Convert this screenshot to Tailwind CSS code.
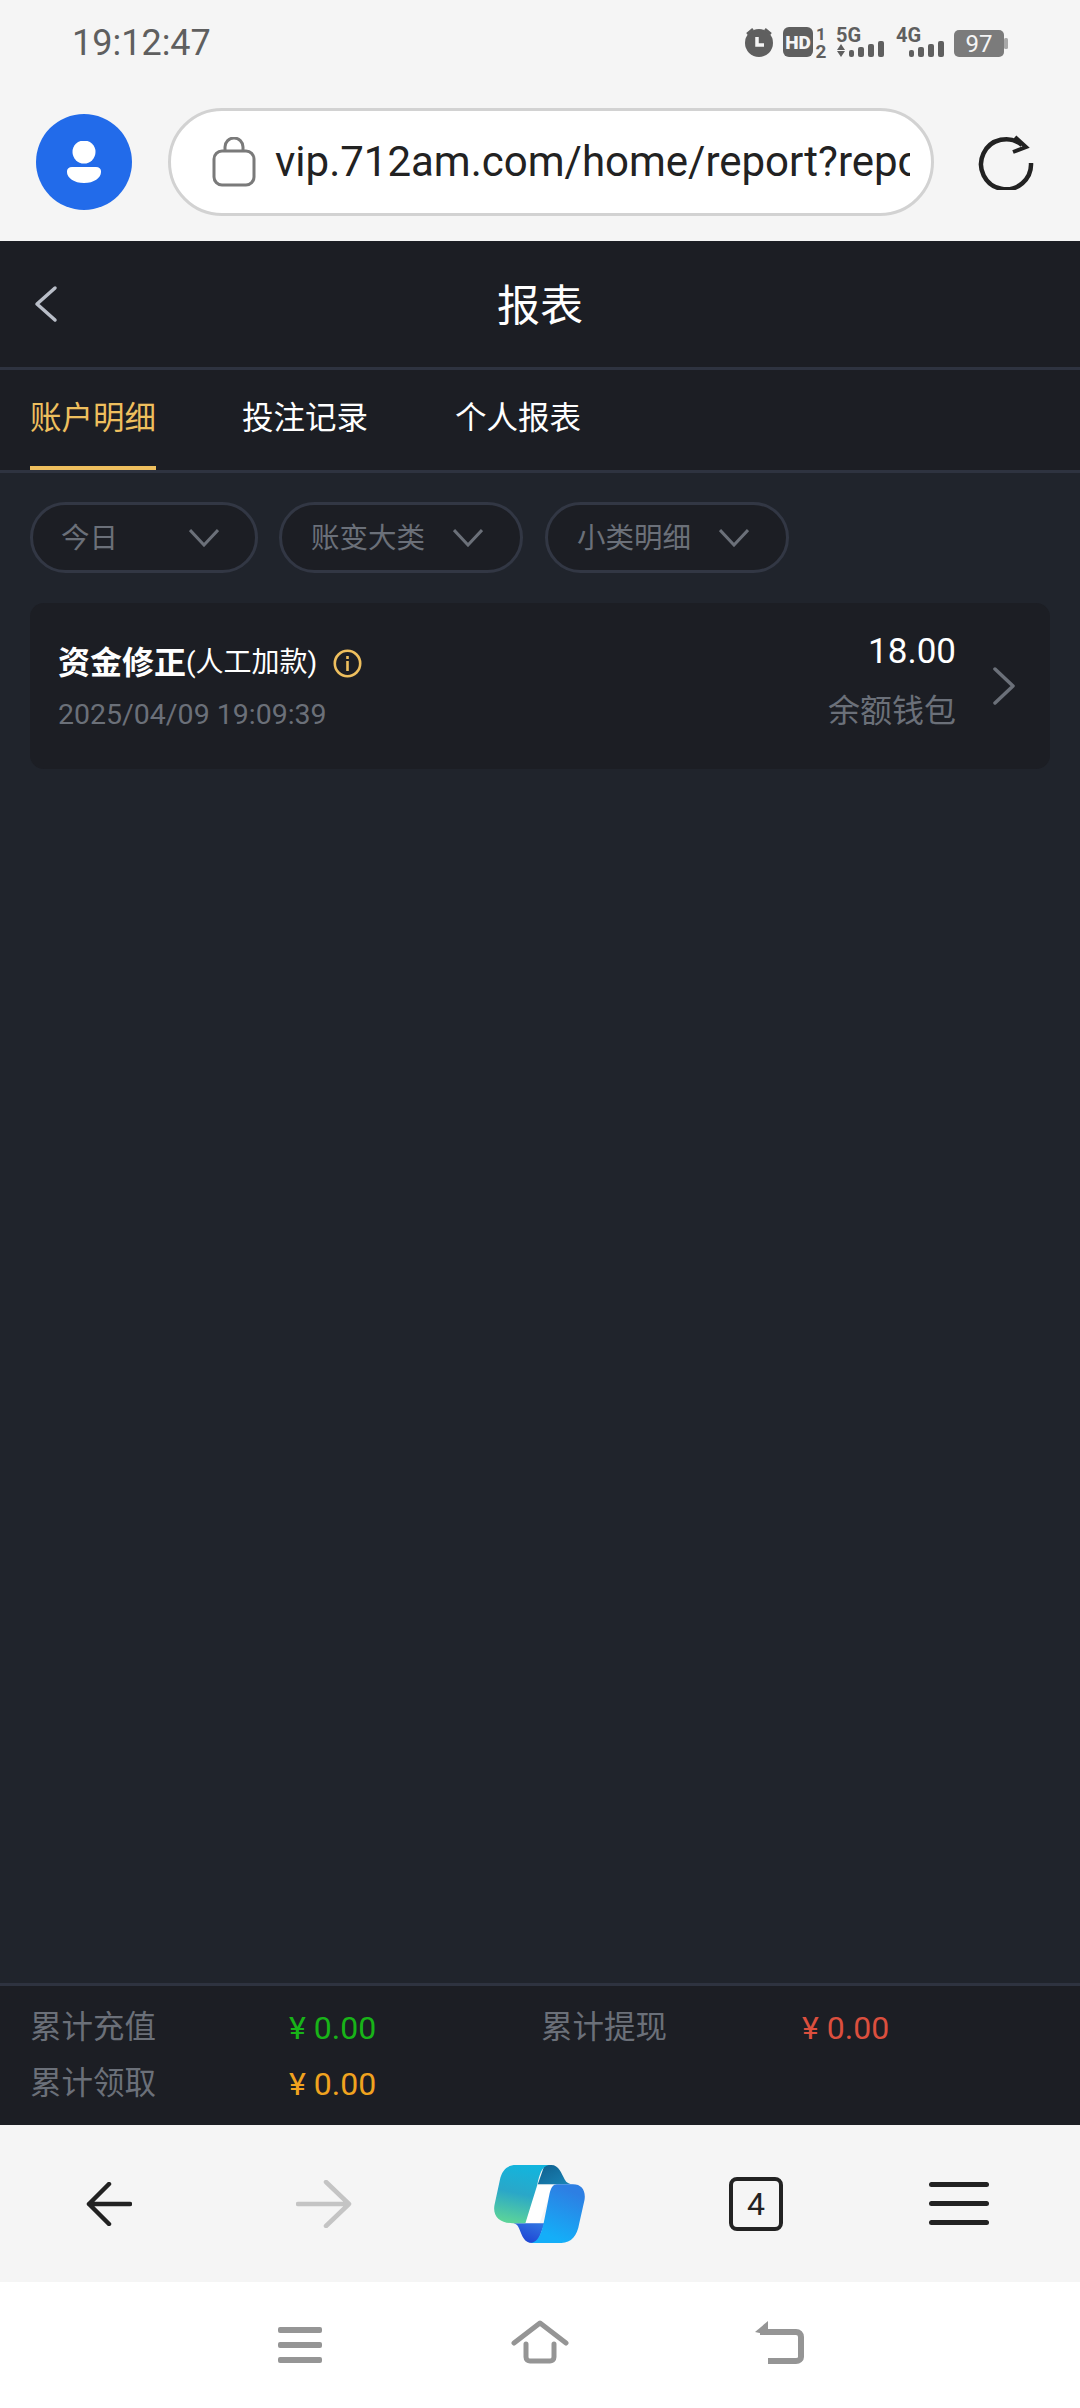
<!DOCTYPE html>
<html lang="zh-CN">
<head>
    <meta charset="UTF-8">
    <meta name="viewport" content="width=device-width, initial-scale=1.0">
    <title>报表</title>
    <script src="https://cdn.jsdelivr.net/npm/@tailwindcss/browser@4"></script>
</head>
<body class="bg-white">
<div class="w-[1080px] h-[2408px] flex flex-col overflow-hidden font-['Roboto','Noto_Sans_CJK_SC',sans-serif]">

    <!-- browser top -->
    <div class="h-[241px] bg-[#f5f5f5] shrink-0">
        <div class="h-[108px] flex justify-between pl-[72px] pr-[70px]">
            <div class="text-[36px] leading-[42px] pt-[22px] text-[#5f5f5f]">19:12:47</div>
            <svg class="mt-[24px] mr-[-4px]" width="270" height="46" viewBox="744 24 270 46" font-family="Roboto" fill="#5f5f5f">
                <circle cx="759" cy="43" r="14" />
                <path d="M747 34l6-5M771 34l-6-5" stroke="#5f5f5f" stroke-width="2.5" fill="none"/>
                <path d="M757 37v8h7" stroke="#f5f5f5" stroke-width="3.5" fill="none"/>
                <rect x="783" y="27" width="30" height="30" rx="6"/>
                <text x="798" y="49" text-anchor="middle" font-size="19" font-weight="900" fill="#f5f5f5">HD</text>
                <text x="821" y="40" text-anchor="middle" font-size="17" font-weight="700">1</text>
                <text x="821" y="58" text-anchor="middle" font-size="19" font-weight="700">2</text>
                <text x="836" y="42" font-size="20" font-weight="700">5G</text>
                <path d="M837 50l4-6 4 6zM837 51h8l-4 6z"/>
                <rect x="849" y="50" width="5" height="7" rx="2"/><rect x="858" y="47" width="6" height="10" rx="2"/><rect x="868" y="44" width="6" height="13" rx="2"/><rect x="878" y="41" width="6" height="16" rx="2"/>
                <text x="896" y="42" font-size="20" font-weight="700">4G</text>
                <rect x="909" y="50" width="5" height="7" rx="2"/><rect x="918" y="47" width="6" height="10" rx="2"/><rect x="928" y="44" width="6" height="13" rx="2"/><rect x="938" y="41" width="6" height="16" rx="2"/>
                <rect x="954" y="30" width="50" height="27" rx="5" fill="#7b7b7b"/>
                <rect x="1004" y="38" width="4" height="11" rx="1.5" fill="#a8a8a8"/>
                <text x="979" y="52" text-anchor="middle" font-size="24" fill="#f5f5f5">97</text>
            </svg>
        </div>
        <div class="flex items-start pl-[36px]">
            <div class="w-[96px] h-[96px] mt-[6px] rounded-full bg-[#226bea] flex items-center justify-center">
                <svg width="34" height="42" viewBox="0 0 34 42" fill="#fff">
                    <circle cx="17" cy="11" r="11.5"/>
                    <path d="M5 26h24c3 0 5 2 5 4v1c0 6-7 11-17 11S0 37 0 31v-1c0-2 2-4 5-4z"/>
                </svg>
            </div>
            <div class="ml-[36px] w-[766px] h-[108px] rounded-full border-[3px] border-[#d2d2d2] bg-white flex items-center pl-[41px] pr-[21px]">
                <svg class="shrink-0" width="44" height="50" viewBox="0 0 44 50" fill="none" stroke="#7a7a7a" stroke-width="3">
                    <rect x="2" y="14" width="40" height="34" rx="8"/>
                    <path d="M13 14v-4a9 9 0 0 1 18 0v4"/>
                </svg>
                <div class="ml-[19px] overflow-hidden whitespace-nowrap text-[42px] leading-[50px] text-[#222]">vip.712am.com/home/report?report=1</div>
            </div>
            <svg class="ml-[43px] mt-[26px]" width="58" height="56" viewBox="0 0 58 56" fill="none" stroke="#222" stroke-width="4.5">
                <path d="M45 11A25 25 0 1 0 54 29" />
                <path d="M38 3l11 10-13 5" stroke-width="4"/>
            </svg>
        </div>
    </div>

    <!-- header -->
    <div class="h-[129px] shrink-0 bg-[#1c1e24] border-b-[3px] border-[#2e3340] relative flex items-center justify-center">
        <svg class="absolute left-[33px] top-[44px]" width="26" height="38" viewBox="0 0 26 38" fill="none" stroke="#b9bec8" stroke-width="3.5" stroke-linecap="round" stroke-linejoin="round">
            <path d="M22 3L4 19l18 16"/>
        </svg>
        <div class="text-[43px] leading-[50px] text-white pt-[3px]">报表</div>
    </div>

    <!-- tabs -->
    <div class="h-[103px] shrink-0 bg-[#1c1e24] border-b-[3px] border-[#2e3340] flex pl-[30px] text-[31.5px] text-white">
        <div class="flex items-center border-b-4 border-[#eebf5e] text-[#eebf5e] pt-[2px]">账户明细</div>
        <div class="flex items-center ml-[86px] mb-[4px] pt-[2px]">投注记录</div>
        <div class="flex items-center ml-[87px] mb-[4px] pt-[2px]">个人报表</div>
    </div>

    <!-- list -->
    <div class="flex-1 bg-[#20242c] px-[30px] pt-[29px]">
        <div class="flex text-[28.5px] text-[#6b7079]">
            <div class="w-[228px] h-[71px] rounded-full border-[3px] border-[#323744] bg-[#1c1e24] flex items-center justify-between pl-[28px] pr-[36px]">
                <span class="pt-[4px]">今日</span>
                <svg width="30" height="18" viewBox="0 0 30 18" fill="none" stroke="#6b7079" stroke-width="3"><path d="M1 1l14 15L29 1"/></svg>
            </div>
            <div class="ml-[21px] w-[244px] h-[71px] rounded-full border-[3px] border-[#323744] bg-[#1c1e24] flex items-center justify-between pl-[29px] pr-[37px]">
                <span class="pt-[4px]">账变大类</span>
                <svg width="30" height="18" viewBox="0 0 30 18" fill="none" stroke="#6b7079" stroke-width="3"><path d="M1 1l14 15L29 1"/></svg>
            </div>
            <div class="ml-[22px] w-[244px] h-[71px] rounded-full border-[3px] border-[#323744] bg-[#1c1e24] flex items-center justify-between pl-[29px] pr-[37px]">
                <span class="pt-[4px]">小类明细</span>
                <svg width="30" height="18" viewBox="0 0 30 18" fill="none" stroke="#6b7079" stroke-width="3"><path d="M1 1l14 15L29 1"/></svg>
            </div>
        </div>

        <div class="mt-[30px] h-[166px] rounded-[14px] bg-[#1c1e24] flex justify-between pl-[28px] pr-[34px]">
            <div class="pt-[38px]">
                <div class="h-[44px] flex items-center text-white">
                    <span class="text-[32px] font-bold">资金修正</span><span class="text-[28px]">(人工加款)</span>
                    <svg class="ml-[16px]" width="29" height="29" viewBox="0 0 29 29" fill="none" stroke="#eebf5e" stroke-width="2.6">
                        <circle cx="14.5" cy="14.5" r="12.7"/>
                        <path d="M14.5 12v10M14.5 7v3"/>
                    </svg>
                </div>
                <div class="mt-[10px] text-[28.5px] leading-[40px] text-[#6b7079]">2025/04/09 19:09:39</div>
            </div>
            <div class="flex">
                <div class="pt-[29px] text-right">
                    <div class="text-[35px] leading-[40px] text-white">18.00</div>
                    <div class="mt-[19px] text-[32px] leading-[40px] text-[#6b7079]">余额钱包</div>
                </div>
                <svg class="ml-[36px] mt-[64px]" width="24" height="38" viewBox="0 0 24 38" fill="none" stroke="#6b7079" stroke-width="3.5" stroke-linecap="round" stroke-linejoin="round">
                    <path d="M3 2l18 17L3 36"/>
                </svg>
            </div>
        </div>
    </div>

    <!-- totals -->
    <div class="h-[142px] shrink-0 bg-[#1c1e24] border-t-[3px] border-[#2e3340] pt-[14px] pl-[30px] grid grid-cols-[259px_252px_261px_1fr] auto-rows-[56px] items-center text-[31.5px] text-[#6b7079]">
        <div>累计充值</div>
        <div class="text-[#18b418] text-[32px]">¥<span class="ml-[8px]">0.00</span></div>
        <div>累计提现</div>
        <div class="text-[#db4f3e] text-[32px]">¥<span class="ml-[8px]">0.00</span></div>
        <div>累计领取</div>
        <div class="text-[#f0a31f] text-[32px]">¥<span class="ml-[8px]">0.00</span></div>
    </div>

    <!-- browser bottom -->
    <div class="h-[157px] shrink-0 bg-[#f5f5f5] flex items-center pl-[86px]">
        <svg width="46" height="44" viewBox="0 0 46 44" fill="none" stroke="#222" stroke-width="4.5" stroke-linecap="round" stroke-linejoin="round">
            <path d="M23 2L3 22l20 20M3 22h41"/>
        </svg>
        <svg class="ml-[164px]" width="56" height="48" viewBox="0 0 56 48" fill="none" stroke="#c4c4c4" stroke-width="4.5" stroke-linecap="round" stroke-linejoin="round">
            <path d="M30 2l23 22-23 22M2 24h50"/>
        </svg>
        <svg class="ml-[142px]" width="91" height="78" viewBox="75 75 270 232">
            <defs>
                <linearGradient id="cpLeft" x1="0.6" y1="0" x2="0.4" y2="1">
                    <stop offset="0" stop-color="#12b5de"/>
                    <stop offset="0.5" stop-color="#2aa7c8"/>
                    <stop offset="1" stop-color="#5bd39a"/>
                </linearGradient>
                <linearGradient id="cpRight" x1="0.7" y1="0.1" x2="0.4" y2="0.9">
                    <stop offset="0" stop-color="#2d7fe3"/>
                    <stop offset="1" stop-color="#14aef8"/>
                </linearGradient>
                <linearGradient id="cpFold" x1="0.2" y1="1" x2="0.8" y2="0">
                    <stop offset="0" stop-color="#1c3fd2"/>
                    <stop offset="1" stop-color="#3074e2"/>
                </linearGradient>
                <linearGradient id="cpTop" x1="0" y1="0" x2="1" y2="1">
                    <stop offset="0" stop-color="#0f5f8e"/>
                    <stop offset="1" stop-color="#1a86b8"/>
                </linearGradient>
            </defs>
            <path d="M205 135H250L210 248H160Z" fill="#fff"/>
            <path d="M225 75H245C268 75 275 100 285 118C290 128 298 132 310 132H205Z" fill="url(#cpTop)"/>
            <path d="M135 248H225L208 295C200 305 195 307 188 307C165 307 158 285 150 265C146 255 142 250 132 248Z" fill="url(#cpFold)"/>
            <path d="M140 75H238C218 78 210 100 203 135L168 248H130C95 248 70 230 76 195L92 120C98 92 112 75 140 75Z" fill="url(#cpLeft)"/>
            <path d="M262 132H310C335 132 348 150 344 178L328 250C322 285 305 307 275 307H185C205 305 215 280 222 250L240 160C244 142 250 132 262 132Z" fill="url(#cpRight)"/>
        </svg>
        <div class="ml-[144px] w-[54px] h-[54px] rounded-[8px] border-[4px] border-[#222] flex items-center justify-center text-[32px] text-[#222]">4</div>
        <div class="ml-[146px] w-[60px] flex flex-col gap-[14px]">
            <div class="h-[5px] bg-[#222] rounded-full"></div>
            <div class="h-[5px] bg-[#222] rounded-full"></div>
            <div class="h-[5px] bg-[#222] rounded-full"></div>
        </div>
    </div>

    <!-- system nav -->
    <div class="h-[126px] shrink-0 bg-white flex items-start pl-[278px] pt-[38px]">
        <div class="mt-[7px] w-[44px] flex flex-col gap-[9px]">
            <div class="h-[6px] bg-[#959595] rounded-[2px]"></div>
            <div class="h-[6px] bg-[#959595] rounded-[2px]"></div>
            <div class="h-[6px] bg-[#959595] rounded-[2px]"></div>
        </div>
        <svg class="ml-[189px]" width="58" height="44" viewBox="0 0 58 44" fill="none" stroke="#959595" stroke-width="5" stroke-linejoin="round" stroke-linecap="round">
            <path d="M3 23L29 3l26 20M15 24v13c0 3 2 4 4 4h20c2 0 4-1 4-4V24"/>
        </svg>
        <svg class="ml-[185px]" width="50" height="44" viewBox="0 0 50 44" fill="none" stroke="#959595" stroke-width="6" stroke-linejoin="round">
            <path d="M14 41h28c3 0 5-2 5-4V17c0-3-2-5-5-5H6"/>
            <path d="M14 1L1 12l13 3z" fill="#959595" stroke="none"/>
        </svg>
    </div>
</div>
</body>
</html>
